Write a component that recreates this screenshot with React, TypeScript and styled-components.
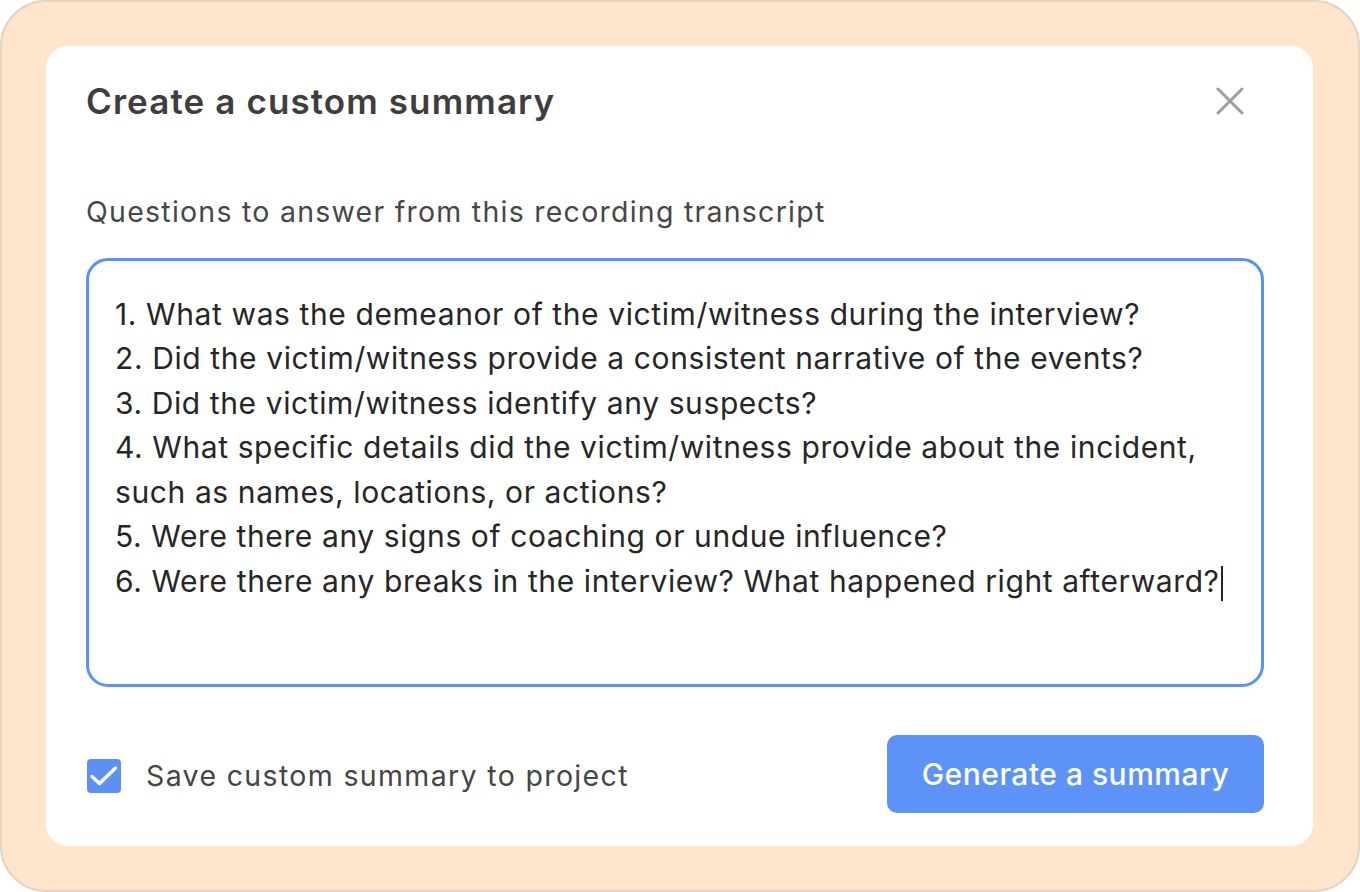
import React from "react";
import styled, { createGlobalStyle } from "styled-components";

const Global = createGlobalStyle`
  html, body { margin: 0; padding: 0; background: #ffffff; }
  body { font-family: Inter, "Noto Sans", sans-serif; }
  * { box-sizing: border-box; }
`;

const Frame = styled.div`
  width: 1360px;
  height: 892px;
  background: #fee5cc;
  border: 2px solid #e2d3c4;
  border-radius: 46px;
  padding: 44px 45px 44px 44px;
  display: flex;
`;

const Card = styled.div`
  flex: 1;
  background: #ffffff;
  border-radius: 22px;
  padding: 0 49px 0 40px;
  display: flex;
  flex-direction: column;
`;

const Header = styled.div`
  display: flex;
  align-items: center;
  justify-content: space-between;
  height: 110px;
`;

const Title = styled.h1`
  margin: 0;
  font-size: 35px;
  font-weight: 600;
  color: #3e3e3e;
  letter-spacing: 1.1px;
`;

const CloseButton = styled.button`
  border: none;
  background: none;
  padding: 0;
  width: 28px;
  height: 28px;
  display: flex;
  align-items: center;
  justify-content: center;
  margin-right: 20px;
  margin-top: -1px;
  cursor: pointer;
`;

const Label = styled.div`
  margin-top: 38px;
  font-size: 28.5px;
  letter-spacing: 1.25px;
  color: #474747;
  line-height: 36px;
`;

const TextArea = styled.div`
  margin-top: 28px;
  height: 429px;
  border: 3px solid #5b90f5;
  border-radius: 22px;
  padding: 31px 26px;
  font-size: 30px;
  letter-spacing: 0.6px;
  line-height: 44.45px;
  color: #262626;
`;

const Line = styled.div`
  white-space: pre-wrap;
`;

const Caret = styled.span`
  display: inline-block;
  width: 2px;
  height: 35px;
  background: #222;
  vertical-align: middle;
  margin-left: 1px;
`;

const Footer = styled.div`
  margin-top: 48px;
  display: flex;
  align-items: center;
  justify-content: space-between;
`;

const CheckRow = styled.label`
  display: flex;
  align-items: center;
  gap: 25px;
  padding-left: 1px;
  padding-top: 3px;
  font-size: 28.5px;
  letter-spacing: 1.35px;
  color: #454545;
`;

const CheckBox = styled.span`
  width: 34px;
  height: 34px;
  border-radius: 4px;
  background: #5b90f5;
  display: flex;
  align-items: center;
  justify-content: center;
`;

const PrimaryButton = styled.button`
  width: 377px;
  height: 78px;
  border: none;
  border-radius: 10px;
  background: #5d92f6;
  color: #ffffff;
  font-family: Inter, "Noto Sans", sans-serif;
  font-size: 30px;
  letter-spacing: 0.5px;
  font-weight: 500;
  cursor: pointer;
`;

const lines = [
  "1. What was the demeanor of the victim/witness during the interview?",
  "2. Did the victim/witness provide a consistent narrative of the events?",
  "3. Did the victim/witness identify any suspects?",
  "4. What specific details did the victim/witness provide about the incident,",
  "such as names, locations, or actions?",
  "5. Were there any signs of coaching or undue influence?",
];

export default function App() {
  return (
    <>
      <Global />
      <Frame>
        <Card>
          <Header>
            <Title>Create a custom summary</Title>
            <CloseButton aria-label="Close">
              <svg width="28" height="28" viewBox="0 0 28 28">
                <path d="M2 2 L26 26 M26 2 L2 26" stroke="#9e9e9e" strokeWidth="3" strokeLinecap="round" />
              </svg>
            </CloseButton>
          </Header>
          <Label>Questions to answer from this recording transcript</Label>
          <TextArea>
            {lines.map((l) => (
              <Line key={l}>{l}</Line>
            ))}
            <Line>
              6. Were there any breaks in the interview? What happened right afterward?
              <Caret />
            </Line>
          </TextArea>
          <Footer>
            <CheckRow>
              <CheckBox>
                <svg width="34" height="34" viewBox="0 0 34 34">
                  <path d="M5 17.5 L12.5 24.5 L28.5 9" stroke="#fff" strokeWidth="3.5" fill="none" strokeLinecap="round" strokeLinejoin="round" />
                </svg>
              </CheckBox>
              Save custom summary to project
            </CheckRow>
            <PrimaryButton>Generate a summary</PrimaryButton>
          </Footer>
        </Card>
      </Frame>
    </>
  );
}
